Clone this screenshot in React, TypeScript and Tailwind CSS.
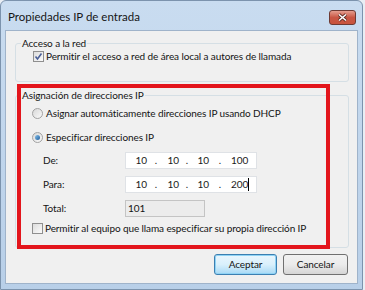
import React from 'react'

const font = { fontFamily: 'Lato, "Noto Sans", sans-serif' }

function CheckBox({ checked }: { checked?: boolean }) {
  return (
    <div className="w-[11px] h-[11px] border border-[#8f8f8f] bg-gradient-to-br from-[#dcdcdc] to-[#fbfbfb] flex items-center justify-center shrink-0">
      {checked && (
        <svg width="9" height="9" viewBox="0 0 9 9">
          <path d="M1.5 4.5 L3.5 7 L7.5 1.5" fill="none" stroke="#4a5f97" strokeWidth="1.6" />
        </svg>
      )}
    </div>
  )
}

function Radio({ checked }: { checked?: boolean }) {
  return (
    <div className="w-[11px] h-[11px] rounded-full border border-[#a2a2a2] bg-gradient-to-br from-[#d8d8d8] to-[#fafafa] flex items-center justify-center shrink-0">
      {checked && <div className="w-[5px] h-[5px] rounded-full bg-gradient-to-br from-[#86c2ec] to-[#1f5e9c]" />}
    </div>
  )
}

function IpField({ last, caret }: { last: string; caret?: boolean }) {
  return (
    <div className="w-[132px] h-[17px] bg-white border border-[#dfe2e6] flex items-center text-[#1a1a1a]">
      <span className="w-[21px] text-right">10</span>
      <span className="w-[18px] text-center">.</span>
      <span className="w-[14px] text-right">10</span>
      <span className="w-[16px] text-center">.</span>
      <span className="w-[14px] text-right">10</span>
      <span className="w-[22px] text-center">.</span>
      <span className="w-[16px] text-right">{last}</span>
      {caret && <span className="w-px h-[13px] bg-black ml-px" />}
    </div>
  )
}

export default function App() {
  return (
    <div style={font} className="w-[365px] h-[290px] bg-[#e9eef4]">
      <div className="w-[363px] h-[290px] rounded-t-[6px] border border-[#7c93ad] bg-gradient-to-b from-[#c9dcf0] to-[#b8cfe8] flex flex-col">
        {/* title bar */}
        <div className="h-[29px] flex items-center justify-between pl-[7px] pr-[6px] shrink-0">
          <span className="text-[11.5px] text-[#151515] mt-[3px]">Propiedades IP de entrada</span>
          <div className="w-[27px] h-[15px] mt-[4px] rounded-[3px] border border-[#6e3a33] bg-gradient-to-b from-[#e59d8f] via-[#c85644] to-[#c9543d] flex items-center justify-center">
            <svg width="11" height="9" viewBox="0 0 11 9">
              <path d="M2 1.5 L9 7.5 M9 1.5 L2 7.5" stroke="#5b2a22" strokeWidth="3.2" />
              <path d="M2 1.5 L9 7.5 M9 1.5 L2 7.5" stroke="#ffffff" strokeWidth="1.6" />
            </svg>
          </div>
        </div>
        {/* client area */}
        <div className="relative ml-[4px] w-[353px] h-[254px] bg-[#f0f0f0] border border-[#9fb3ca] text-[10px] tracking-[-0.1px] text-[#141414] pl-[9px]">
          <fieldset className="mt-[5px] w-[334px] h-[46px] border border-[#d5dfe5] rounded-[3px] px-[5px]">
            <legend className="px-px leading-[14px]">Acceso a la red</legend>
            <div className="flex items-center gap-[2px] ml-[12px] mt-[-1px] leading-[14px]">
              <CheckBox checked />
              <span>Permitir el acceso a red de área local a autores de llamada</span>
            </div>
          </fieldset>
          <fieldset className="mt-[6px] w-[334px] h-[160px] border border-[#d5dfe5] rounded-[3px] px-[5px]">
            <legend className="px-px leading-[14px]">Asignación de direcciones IP</legend>
            <div className="flex flex-col ml-[11px]">
              <div className="flex items-center gap-[3px] h-[14px] mt-[4px]">
                <Radio />
                <span>Asignar automáticamente direcciones IP usando DHCP</span>
              </div>
              <div className="flex items-center gap-[3px] h-[14px] mt-[10px]">
                <Radio checked />
                <span>Especificar direcciones IP</span>
              </div>
              <div className="flex items-center h-[17px] mt-[8px] pl-[11px]">
                <span className="w-[82px]">De:</span>
                <IpField last="100" />
              </div>
              <div className="flex items-center h-[17px] mt-[7px] pl-[11px]">
                <span className="w-[82px]">Para:</span>
                <IpField last="200" caret />
              </div>
              <div className="flex items-center h-[17px] mt-[7px] pl-[11px]">
                <span className="w-[82px]">Total:</span>
                <div className="w-[80px] h-[17px] bg-[#ececec] border border-[#c4c4c4] pl-[2px] leading-[15px]">101</div>
              </div>
              <div className="flex items-center gap-[2px] h-[14px] mt-[4px]">
                <CheckBox />
                <span>Permitir al equipo que llama especificar su propia dirección IP</span>
              </div>
            </div>
          </fieldset>
          <div className="flex justify-end gap-[6px] mt-[6px] pr-[9px]">
            <button className="w-[63px] h-[21px] rounded-[3px] border border-[#3c7fb1] bg-gradient-to-b from-[#eaf6fd] via-[#d9f0fc] to-[#a7d9f5] shadow-[inset_0_0_0_1px_#8fd3f5] text-[10px] tracking-[-0.1px]">
              Aceptar
            </button>
            <button className="w-[65px] h-[21px] rounded-[3px] border border-[#707070] bg-gradient-to-b from-[#f2f2f2] via-[#ebebeb] to-[#d5d5d5] text-[10px] tracking-[-0.1px]">
              Cancelar
            </button>
          </div>
          {/* red highlight annotation */}
          <div className="absolute left-[11px] top-[53px] w-[313px] h-[165px] border-4 border-[#e3151c] pointer-events-none" />
        </div>
      </div>
    </div>
  )
}
